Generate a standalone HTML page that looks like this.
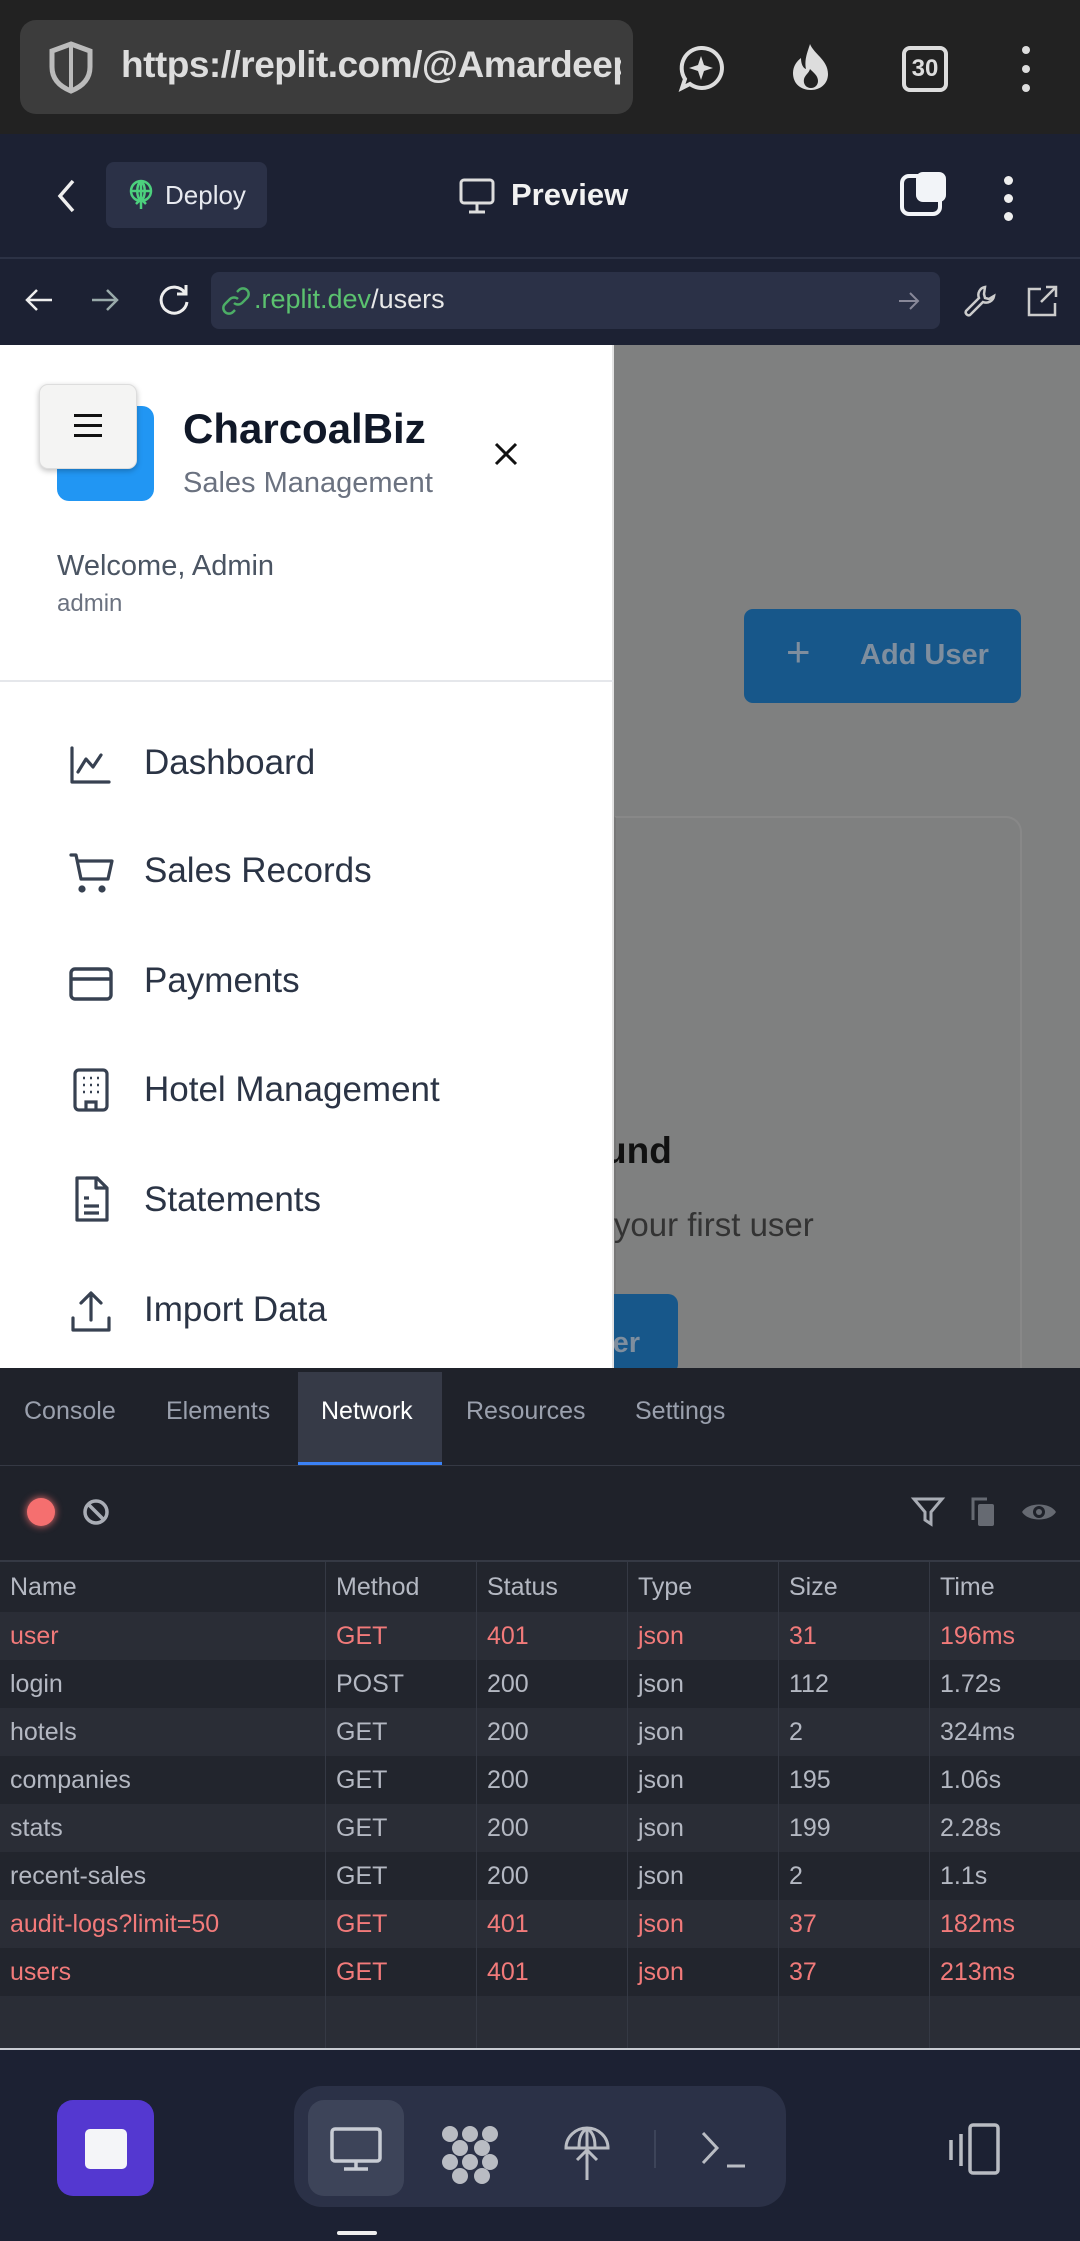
<!DOCTYPE html>
<html><head><meta charset="utf-8"><style>
*{margin:0;padding:0;box-sizing:border-box}
body{width:1080px;height:2241px;overflow:hidden;background:#1c2133;font-family:"Liberation Sans",sans-serif;position:relative}
.a{position:absolute}
svg{position:absolute;overflow:visible}
.nav{font-size:35px;color:#2b3445;left:144px}
.tab{font-size:25px;color:#9aa0ad;top:1397px}
.row{position:absolute;left:0;width:1080px;height:48px;font-size:25px;color:#b4b8c2;line-height:48px}
.row span{position:absolute;left:10px}
.r{color:#f27a7a}
</style></head><body>
<!-- top chrome -->
<div class="a" style="left:0;top:0;width:1080px;height:134px;background:#222"></div>
<div class="a" style="left:20px;top:20px;width:613px;height:94px;border-radius:16px;background:#3c3c3c"></div>
<svg style="left:46px;top:40px" width="50" height="54" viewBox="0 0 50 54"><path d="M25 4 L44 11 V27 C44 40 35 47 25 51 C15 47 6 40 6 27 V11 Z" fill="none" stroke="#bbb" stroke-width="5"/><path d="M25 4 V51" stroke="#bbb" stroke-width="4"/></svg>
<div class="a" style="left:121px;top:44px;font-size:37px;font-weight:bold;color:#ddd;width:500px;overflow:hidden;white-space:nowrap;letter-spacing:-0.5px">https://replit.com/@AmardeepA</div>
<svg style="left:677px;top:44px" width="48" height="48" viewBox="0 0 48 48"><path d="M24 4 A20 20 0 1 1 13 40 L5 44 L8 35 A20 20 0 0 1 24 4Z" fill="none" stroke="#ddd" stroke-width="4"/><path d="M24 12 L27 21 L36 24 L27 27 L24 36 L21 27 L12 24 L21 21Z" fill="#ddd"/></svg>
<svg style="left:788px;top:42px" width="46" height="50" viewBox="0 0 46 50"><path d="M22 2 C26 12 40 18 40 32 C40 42 32 48 23 48 C13 48 5 42 5 31 C5 24 9 19 13 16 C13 22 15 26 18 27 C16 17 20 9 22 2Z" fill="#ddd"/><path d="M23 46 C18 46 15 42 16 37 C17 33 21 31 22 27 C26 31 30 34 30 39 C30 43 27 46 23 46Z" fill="#222"/></svg>
<div class="a" style="left:902px;top:46px;width:46px;height:46px;border:4px solid #ddd;border-radius:8px;color:#ddd;font-size:24px;font-weight:bold;text-align:center;line-height:38px">30</div>
<div class="a" style="left:1022px;top:46px;width:8px;height:8px;border-radius:4px;background:#ddd;box-shadow:0 19px 0 #ddd,0 38px 0 #ddd"></div>
<!-- replit header -->
<div class="a" style="left:0;top:134px;width:1080px;height:124px;background:#1c2133"></div>
<svg style="left:56px;top:178px" width="20" height="36" viewBox="0 0 20 36"><path d="M17 3 L4 18 L17 33" fill="none" stroke="#eee" stroke-width="3.5"/></svg>
<div class="a" style="left:106px;top:162px;width:161px;height:66px;border-radius:8px;background:#2b3147"></div>
<svg style="left:128px;top:180px" width="26" height="30" viewBox="0 0 26 30"><circle cx="13" cy="11" r="10" fill="none" stroke="#4cd07d" stroke-width="2.5"/><path d="M3 11h20M13 1v28M13 1c-5 4-5 16 0 20M13 1c5 4 5 16 0 20M8 24l5-5 5 5" fill="none" stroke="#4cd07d" stroke-width="2.5"/></svg>
<div class="a" style="left:165px;top:180px;font-size:26px;color:#e8eaf0">Deploy</div>
<svg style="left:459px;top:178px" width="36" height="36" viewBox="0 0 36 36"><rect x="2" y="2" width="32" height="23" rx="3" fill="none" stroke="#ddd" stroke-width="3"/><path d="M18 25v8M10 34h16" stroke="#ddd" stroke-width="3"/></svg>
<div class="a" style="left:511px;top:177px;font-size:31px;font-weight:bold;color:#f2f2f2">Preview</div>
<div class="a" style="left:900px;top:174px;width:42px;height:42px;border:4px solid #f2f4f8;border-radius:9px"></div>
<div class="a" style="left:916px;top:172px;width:30px;height:30px;border-radius:7px;background:#f2f4f8"></div>
<div class="a" style="left:1004px;top:176px;width:9px;height:9px;border-radius:5px;background:#eee;box-shadow:0 18px 0 #eee,0 36px 0 #eee"></div>
<div class="a" style="left:0;top:257px;width:1080px;height:2px;background:#2c3245"></div>
<!-- address row -->
<svg style="left:24px;top:285px" width="30" height="30" viewBox="0 0 30 30"><path d="M28 15H3M13 5L3 15l10 10" fill="none" stroke="#eee" stroke-width="2.5"/></svg>
<svg style="left:90px;top:285px" width="30" height="30" viewBox="0 0 30 30"><path d="M2 15h25M17 5l10 10-10 10" fill="none" stroke="#9aa" stroke-width="2.5"/></svg>
<svg style="left:157px;top:283px" width="34" height="34" viewBox="0 0 34 34"><path d="M28 10A13 13 0 1 0 30 19" fill="none" stroke="#eee" stroke-width="3"/><path d="M29 2v9h-9" fill="none" stroke="#eee" stroke-width="3"/></svg>
<div class="a" style="left:211px;top:272px;width:729px;height:57px;border-radius:8px;background:#2b3147"></div>
<svg style="left:222px;top:287px" width="28" height="28" viewBox="0 0 28 28"><path d="M12 16a6 6 0 0 0 8 0l5-5a5.5 5.5 0 0 0-8-8l-2 2M16 12a6 6 0 0 0-8 0l-5 5a5.5 5.5 0 0 0 8 8l2-2" fill="none" stroke="#4cae66" stroke-width="2.5"/></svg>
<div class="a" style="left:254px;top:284px;font-size:27px;color:#5bc26f">.replit.dev<span style="color:#e8e8e8">/users</span></div>
<svg style="left:898px;top:290px" width="22" height="22" viewBox="0 0 22 22"><path d="M1 11h19M12 3l8 8-8 8" fill="none" stroke="#889" stroke-width="2"/></svg>
<svg style="left:963px;top:284px" width="34" height="34" viewBox="0 0 34 34"><path d="M22 3a8 8 0 0 0-6 11L3 27a3 3 0 0 0 4 4l13-13a8 8 0 0 0 11-6l-5 3-4-1-1-4z" fill="none" stroke="#ccc" stroke-width="2.5"/></svg>
<svg style="left:1025px;top:284px" width="34" height="34" viewBox="0 0 34 34"><path d="M16 5H4v26h26V19M21 3h10v10M31 3L16 18" fill="none" stroke="#ccc" stroke-width="2.5"/></svg>
<!-- content right (overlay) -->
<div class="a" style="left:613px;top:345px;width:467px;height:1023px;background:#7f8080"></div>
<div class="a" style="left:614px;top:816px;width:408px;height:560px;border:2px solid #777;border-right-color:#888;border-top-color:#888;border-radius:0 16px 0 0;"></div>
<div class="a" style="left:744px;top:609px;width:277px;height:94px;border-radius:9px;background:#17578a"></div>
<div class="a" style="left:786px;top:628px;font-size:42px;color:#7f8e9e">+</div>
<div class="a" style="left:860px;top:639px;font-size:29px;font-weight:bold;color:#7f8e9e">Add User</div>
<div class="a" style="left:456px;top:1130px;font-size:37px;font-weight:bold;color:#111;width:700px">Users found</div>
<div class="a" style="left:546px;top:1206px;font-size:33px;color:#333">Add your first user</div>
<div class="a" style="left:560px;top:1294px;width:118px;height:80px;border-radius:10px;background:#17578a"></div>
<div class="a" style="left:560px;top:1327px;font-size:29px;font-weight:bold;color:#7f8e9e;width:80px;text-align:right">er</div>
<!-- sidebar -->
<div class="a" style="left:0;top:345px;width:613px;height:1023px;background:#fff"></div>
<div class="a" style="left:612px;top:345px;width:2px;height:1023px;background:#e3e3e3"></div>
<div class="a" style="left:57px;top:406px;width:97px;height:95px;border-radius:12px;background:#2196f3"></div>
<div class="a" style="left:39px;top:384px;width:98px;height:85px;border-radius:9px;background:#f4f4f3;border:1px solid #ddd;box-shadow:0 2px 6px rgba(0,0,0,.25)"></div>
<div class="a" style="left:74px;top:414px;width:28px;height:3px;background:#111;box-shadow:0 10px 0 #111,0 20px 0 #111"></div>
<div class="a" style="left:183px;top:405px;font-size:42px;font-weight:bold;color:#101828">CharcoalBiz</div>
<div class="a" style="left:183px;top:467px;font-size:29px;color:#6b7280">Sales Management</div>
<svg style="left:494px;top:442px" width="24" height="24" viewBox="0 0 24 24"><path d="M2 2l20 20M22 2L2 22" stroke="#111" stroke-width="3"/></svg>
<div class="a" style="left:57px;top:550px;font-size:29px;color:#4b5563">Welcome, Admin</div>
<div class="a" style="left:57px;top:590px;font-size:24px;color:#6b7280">admin</div>
<div class="a" style="left:0;top:680px;width:613px;height:2px;background:#e5e7eb"></div>
<svg style="left:69px;top:745px" width="42" height="40" viewBox="0 0 42 40" fill="none" stroke="#374151" stroke-width="3.2" stroke-linejoin="round" stroke-linecap="round"><path d="M3 3v34h37M9 27l8-13 7 8 8-12"/></svg>
<div class="a nav" style="top:743px">Dashboard</div>
<svg style="left:68px;top:852px" width="46" height="44" viewBox="0 0 46 44" fill="none" stroke="#374151" stroke-width="3.2" stroke-linejoin="round" stroke-linecap="round"><path d="M3 3h5l5 24h27l4-18H10"/><circle cx="14" cy="37" r="2" fill="#374151"/><circle cx="34" cy="37" r="2" fill="#374151"/></svg>
<div class="a nav" style="top:851px">Sales Records</div>
<svg style="left:69px;top:967px" width="44" height="34" viewBox="0 0 44 34" fill="none" stroke="#374151" stroke-width="3.4"><rect x="2" y="2" width="40" height="30" rx="4"/><path d="M2 12h40"/></svg>
<div class="a nav" style="top:961px">Payments</div>
<svg style="left:73px;top:1068px" width="36" height="44" viewBox="0 0 36 44" fill="none" stroke="#374151" stroke-width="3.2"><rect x="2" y="2" width="32" height="40" rx="4"/><path d="M13 42v-8h10v8" /><path d="M10 10h2M17 10h2M24 10h2M10 17h2M17 17h2M24 17h2M10 24h2M17 24h2M24 24h2" stroke-width="2.5"/></svg>
<div class="a nav" style="top:1070px">Hotel Management</div>
<svg style="left:73px;top:1176px" width="36" height="48" viewBox="0 0 36 48" fill="none" stroke="#374151" stroke-width="3.2" stroke-linejoin="round"><path d="M4 2h20l10 10v32H4z"/><path d="M23 2v10h11M11 22h5M11 30h15M11 37h15"/></svg>
<div class="a nav" style="top:1180px">Statements</div>
<svg style="left:70px;top:1290px" width="42" height="44" viewBox="0 0 42 44" fill="none" stroke="#374151" stroke-width="3.2" stroke-linejoin="round" stroke-linecap="round"><path d="M3 28v12h36V28M21 30V4M11 13l10-10 10 10"/></svg>
<div class="a nav" style="top:1290px">Import Data</div>
<!-- devtools -->
<div class="a" style="left:0;top:1368px;width:1080px;height:682px;background:#1f222a"></div>
<div class="a" style="left:298px;top:1372px;width:144px;height:93px;background:#363a47"></div>
<div class="a" style="left:298px;top:1462px;width:144px;height:3px;background:#3b82f6"></div>
<div class="a" style="left:0;top:1465px;width:1080px;height:1px;background:#353944"></div>
<div class="a tab" style="left:24px">Console</div>
<div class="a tab" style="left:166px">Elements</div>
<div class="a tab" style="left:321px;color:#fff">Network</div>
<div class="a tab" style="left:466px">Resources</div>
<div class="a tab" style="left:635px">Settings</div>
<div class="a" style="left:27px;top:1498px;width:28px;height:28px;border-radius:14px;background:#f56f6f;box-shadow:0 0 8px #f56f6f"></div>
<svg style="left:82px;top:1498px" width="28" height="28" viewBox="0 0 28 28" fill="none" stroke="#a9adb5" stroke-width="3.5"><circle cx="14" cy="14" r="11"/><path d="M6 6l16 16"/></svg>
<svg style="left:912px;top:1496px" width="32" height="32" viewBox="0 0 32 32" fill="none" stroke="#a9adb5" stroke-width="3"><path d="M2 3h28L19 16v12l-6-4V16z"/></svg>
<svg style="left:970px;top:1496px" width="26" height="32" viewBox="0 0 26 32"><rect x="8" y="8" width="16" height="22" rx="2" fill="#666a72"/><path d="M3 24V3h14" fill="none" stroke="#666a72" stroke-width="3"/></svg>
<svg style="left:1020px;top:1498px" width="38" height="28" viewBox="0 0 38 28"><path d="M2 14C8 4 30 4 36 14C30 24 8 24 2 14Z" fill="#666a72"/><circle cx="19" cy="14" r="6" fill="#1f222a"/><circle cx="19" cy="14" r="3" fill="#666a72"/></svg>
<div class="a" style="left:0;top:1560px;width:1080px;height:2px;background:#353944"></div>
<div class="row" style="top:1562px;height:50px;line-height:50px;background:#22252d"><span>Name</span><span style="left:336px">Method</span><span style="left:487px">Status</span><span style="left:638px">Type</span><span style="left:789px">Size</span><span style="left:940px">Time</span></div>
<div class="row r" style="top:1612px;background:#2a2d36"><span>user</span><span style="left:336px">GET</span><span style="left:487px">401</span><span style="left:638px">json</span><span style="left:789px">31</span><span style="left:940px">196ms</span></div>
<div class="row" style="top:1660px;background:#22252d"><span>login</span><span style="left:336px">POST</span><span style="left:487px">200</span><span style="left:638px">json</span><span style="left:789px">112</span><span style="left:940px">1.72s</span></div>
<div class="row" style="top:1708px;background:#2a2d36"><span>hotels</span><span style="left:336px">GET</span><span style="left:487px">200</span><span style="left:638px">json</span><span style="left:789px">2</span><span style="left:940px">324ms</span></div>
<div class="row" style="top:1756px;background:#22252d"><span>companies</span><span style="left:336px">GET</span><span style="left:487px">200</span><span style="left:638px">json</span><span style="left:789px">195</span><span style="left:940px">1.06s</span></div>
<div class="row" style="top:1804px;background:#2a2d36"><span>stats</span><span style="left:336px">GET</span><span style="left:487px">200</span><span style="left:638px">json</span><span style="left:789px">199</span><span style="left:940px">2.28s</span></div>
<div class="row" style="top:1852px;background:#22252d"><span>recent-sales</span><span style="left:336px">GET</span><span style="left:487px">200</span><span style="left:638px">json</span><span style="left:789px">2</span><span style="left:940px">1.1s</span></div>
<div class="row r" style="top:1900px;background:#2a2d36"><span>audit-logs?limit=50</span><span style="left:336px">GET</span><span style="left:487px">401</span><span style="left:638px">json</span><span style="left:789px">37</span><span style="left:940px">182ms</span></div>
<div class="row r" style="top:1948px;background:#22252d"><span>users</span><span style="left:336px">GET</span><span style="left:487px">401</span><span style="left:638px">json</span><span style="left:789px">37</span><span style="left:940px">213ms</span></div>
<div class="row" style="top:1996px;height:52px;background:#2a2d36"></div>
<div class="a" style="left:325px;top:1562px;width:1px;height:486px;background:#353944;box-shadow:151px 0 0 #353944,302px 0 0 #353944,453px 0 0 #353944,604px 0 0 #353944"></div>
<div class="a" style="left:0;top:2048px;width:1080px;height:2px;background:#c8cbd2"></div>
<!-- bottom nav -->
<div class="a" style="left:57px;top:2100px;width:97px;height:96px;border-radius:16px;background:#5438d0"></div>
<div class="a" style="left:85px;top:2129px;width:42px;height:40px;border-radius:5px;background:#f4f5f8"></div>
<div class="a" style="left:294px;top:2086px;width:492px;height:121px;border-radius:28px;background:#2b3147"></div>
<div class="a" style="left:308px;top:2100px;width:96px;height:96px;border-radius:16px;background:#3d4459"></div>
<svg style="left:330px;top:2127px" width="52" height="44" viewBox="0 0 52 44" fill="none" stroke="#c8ccd4" stroke-width="3.5"><rect x="2" y="2" width="48" height="32" rx="3"/><path d="M26 34v8M14 42h24"/></svg>
<svg style="left:440px;top:2124px" width="62" height="62" viewBox="0 0 62 62" fill="#b9bcc3"><circle cx="10" cy="10" r="8"/><circle cx="30" cy="10" r="8"/><circle cx="50" cy="10" r="8"/><circle cx="20" cy="24" r="8"/><circle cx="42" cy="24" r="8"/><circle cx="10" cy="38" r="8"/><circle cx="30" cy="38" r="8"/><circle cx="50" cy="38" r="8"/><circle cx="20" cy="52" r="8"/><circle cx="42" cy="52" r="8"/></svg>
<svg style="left:563px;top:2126px" width="48" height="56" viewBox="0 0 48 56" fill="none" stroke="#b9bcc3" stroke-width="3"><path d="M3 22a21 20 0 0 1 42 0zM24 2c-8 6-8 14-8 20M24 2c8 6 8 14 8 20M24 2v52M14 34l10-10 10 10"/></svg>
<div class="a" style="left:654px;top:2130px;width:2px;height:38px;background:#3d4459"></div>
<svg style="left:700px;top:2130px" width="48" height="40" viewBox="0 0 48 40" fill="none" stroke="#b9bcc3" stroke-width="3"><path d="M3 3l14 15L3 33M27 36h18"/></svg>
<svg style="left:945px;top:2122px" width="58" height="56" viewBox="0 0 58 56" fill="none" stroke="#b9bcc3" stroke-width="3.5"><rect x="25" y="3" width="28" height="48" rx="3"/><path d="M16 12v32M6 18v20"/></svg>
<div class="a" style="left:337px;top:2231px;width:40px;height:4px;border-radius:2px;background:#eee"></div>
</body></html>
